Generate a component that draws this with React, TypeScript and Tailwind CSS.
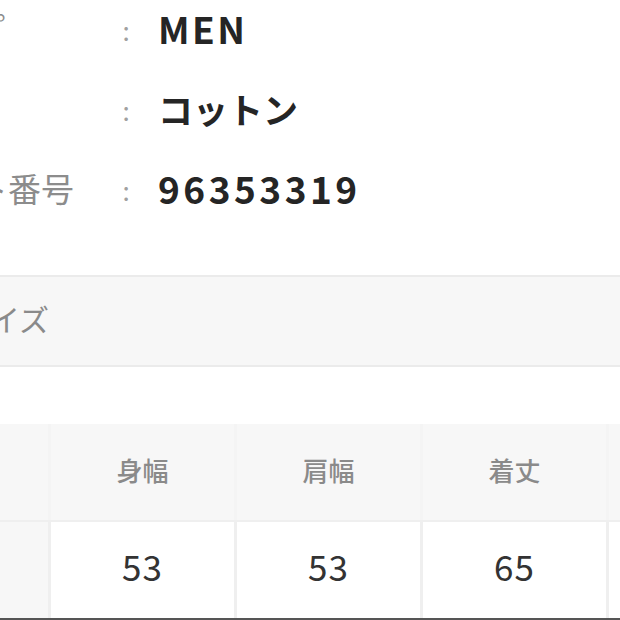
import React from "react";

const specs = [
  { label: "タイプ", value: "MEN", track: "tracking-[2.5px]", size: "text-[37px]", shift: "-ml-[5px]" },
  { label: "素材", value: "コットン", track: "tracking-[0px]", size: "text-[35px]", shift: "" },
  { label: "ロット番号", value: "96353319", track: "tracking-[3.5px]", size: "text-[37px]", shift: "-ml-[2px]" },
];

const sizeHeads = ["身幅", "肩幅", "着丈", "袖丈"];
const sizeValues = ["53", "53", "65", "22"];

const App: React.FC = () => {
  return (
    <div className="w-[620px] h-[620px] overflow-hidden bg-white font-['Noto_Sans_CJK_JP','Noto_Sans',sans-serif]">
      {/* Spec rows */}
      <div className="-mt-[11px] -ml-[89px]">
        {specs.map((s) => (
          <div key={s.label} className="flex items-center h-[80px] whitespace-nowrap">
            <div className="w-[205px] shrink-0 text-[33px] text-[#8c8c8c]">
              <span className={`inline-block ${s.shift}`}>{s.label}</span>
            </div>
            <div className="w-[20px] shrink-0 text-center text-[26px] text-[#a0a0a0]">:</div>
            <div className={`pl-[22px] font-semibold text-[#252525] ${s.size} ${s.track}`}>
              {s.value}
            </div>
          </div>
        ))}
      </div>

      {/* Size section header */}
      <div className="mt-[46px] h-[92px] flex items-center pb-[6px] border-y-2 border-[#ebebeb] bg-[#f7f7f7]">
        <div className="-ml-[40px] text-[30px] text-[#8a8a8a] whitespace-nowrap">サイズ</div>
      </div>

      {/* Size table */}
      <div className="mt-[57px] -ml-[135px] w-[927px]">
        <div className="grid grid-cols-[183px_183px_183px_183px_183px] gap-[3px] bg-[#f4f4f4]">
          <div className="h-[96px] bg-[#f7f7f7]" />
          {sizeHeads.map((h) => (
            <div
              key={h}
              className="h-[96px] pb-[6px] bg-[#f7f7f7] flex items-center justify-center text-[26px] font-medium text-[#8a8a8a]"
            >
              {h}
            </div>
          ))}
        </div>
        <div className="h-[2px] bg-[#efefef]" />
        <div className="grid grid-cols-[183px_183px_183px_183px_183px] gap-[3px] bg-[#efefef]">
          <div className="h-[96px] bg-[#f7f7f7]" />
          {sizeValues.map((v, i) => (
            <div
              key={i}
              className="h-[96px] pb-[8px] bg-white flex items-center justify-center text-[35px] text-[#333] tracking-[1px]"
            >
              {v}
            </div>
          ))}
        </div>
      </div>
      <div className="h-[2px] bg-[#555]" />
    </div>
  );
};

export default App;
